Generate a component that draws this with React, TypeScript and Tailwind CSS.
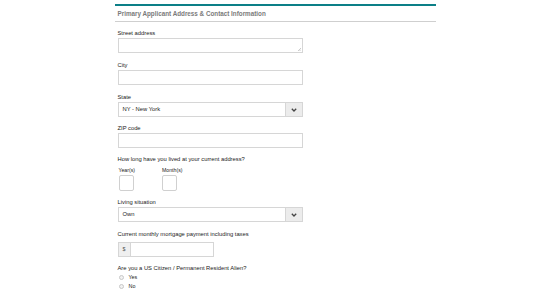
import React from "react";

const font = { fontFamily: '"Liberation Sans", Arial, sans-serif' };

const Label = ({ children, className = "" }: { children: React.ReactNode; className?: string }) => (
  <div className={`text-[5.8px] leading-[7px] text-[#222] ${className}`}>{children}</div>
);

const Chevron = () => (
  <svg width="6" height="4" viewBox="0 0 6 4">
    <path d="M0.8 0.8 L3 3 L5.2 0.8" fill="none" stroke="#444" strokeWidth="1.3" />
  </svg>
);

const Select = ({ value }: { value: string }) => (
  <div className="mt-[1px] flex h-[15px] w-[185px] items-center border border-[#d6d6d6] bg-white">
    <span className="flex-1 pl-[4px] text-[5.8px] text-[#222]">{value}</span>
    <span className="flex h-full w-[17px] items-center justify-center border-l border-[#d6d6d6] bg-[#ececec]">
      <Chevron />
    </span>
  </div>
);

const Radio = ({ label }: { label: string }) => (
  <div className="mt-[2px] flex h-[7px] items-center gap-[5px] pl-[1px]">
    <span className="h-[5px] w-[5px] rounded-full border border-[#c8c8c8] bg-[#f2f2f2]" />
    <span className="text-[5.4px] text-[#222]">{label}</span>
  </div>
);

export default function App() {
  return (
    <div className="min-h-[298px] w-full bg-white" style={font}>
      <div className="mx-auto w-[321px] pt-[4px]">
        <div className="border-t-2 border-[#0c7f87]" />
        <div className="flex h-[16px] items-center border-b border-[#cfcfcf] pl-[3px]">
          <span className="text-[6.3px] font-bold text-[#7a7a7a]">
            Primary Applicant Address &amp; Contact Information
          </span>
        </div>

        <div className="pl-[3px]">
          <Label className="mt-[8px]">Street address</Label>
          <div className="relative mt-[1px] h-[15px] w-[185px] border border-[#d6d6d6]">
            <svg className="absolute bottom-[1px] right-[1px]" width="3" height="3" viewBox="0 0 3 3">
              <path d="M0 3 L3 0 M1.5 3 L3 1.5" stroke="#999" strokeWidth="0.5" />
            </svg>
          </div>

          <Label className="mt-[9px]">City</Label>
          <div className="mt-[1px] h-[15px] w-[185px] border border-[#d6d6d6]" />

          <Label className="mt-[9px]">State</Label>
          <Select value="NY - New York" />

          <Label className="mt-[8px]">ZIP code</Label>
          <div className="mt-[1px] h-[15px] w-[185px] border border-[#d6d6d6]" />

          <Label className="mt-[8px]">How long have you lived at your current address?</Label>
          <div className="mt-[4px] flex gap-[27px] pl-[1px]">
            <div>
              <div className="text-[5.2px] leading-[7px] text-[#222]">Year(s)</div>
              <div className="mt-[1px] h-[16px] w-[15px] rounded-[2px] border border-[#d0d0d0]" />
            </div>
            <div>
              <div className="text-[5.2px] leading-[7px] text-[#222]">Month(s)</div>
              <div className="mt-[1px] h-[16px] w-[15px] rounded-[2px] border border-[#d0d0d0]" />
            </div>
          </div>

          <Label className="mt-[8px]">Living situation</Label>
          <Select value="Own" />

          <Label className="mt-[9px]">Current monthly mortgage payment including taxes</Label>
          <div className="mt-[4px] flex h-[15px] w-[96px] border border-[#d6d6d6]">
            <span className="flex w-[12px] items-center justify-center border-r border-[#d6d6d6] bg-[#efefef] text-[5.4px] text-[#555]">
              $
            </span>
            <span className="flex-1" />
          </div>

          <Label className="mt-[8px]">Are you a US Citizen / Permanent Resident Alien?</Label>
          <Radio label="Yes" />
          <Radio label="No" />
        </div>
      </div>
    </div>
  );
}
